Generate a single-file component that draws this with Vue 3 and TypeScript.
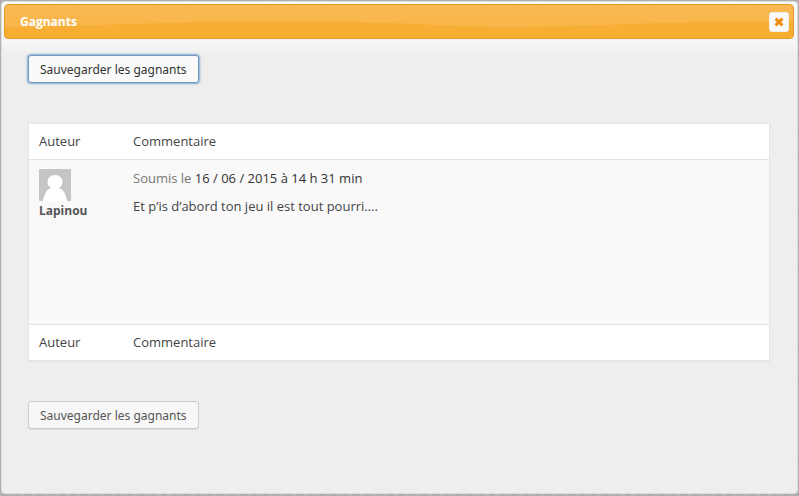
<script setup lang="ts">
import { ref } from 'vue'

interface Comment {
  id: number
  author: string
  date: string
  text: string
}

const open = ref(true)
const comments: Comment[] = [
  {
    id: 1,
    author: 'Lapinou',
    date: '16 / 06 / 2015 à 14 h 31 min',
    text: 'Et p’is d’abord ton jeu il est tout pourri….',
  },
]
</script>

<template>
  <div class="overlay">
    <section v-if="open" class="dialog" role="dialog" aria-labelledby="dialog-title">
      <header class="titlebar">
        <svg class="gloss" aria-hidden="true" width="100%" height="100%">
          <defs>
            <pattern id="wave" width="500" height="34" patternUnits="userSpaceOnUse">
              <path d="M0 0H500V22C440 22 400 16 270 16C150 16 90 22 0 22Z" fill="#fff" fill-opacity=".1" />
            </pattern>
          </defs>
          <rect width="100%" height="100%" fill="url(#wave)" />
        </svg>
        <h1 id="dialog-title">Gagnants</h1>
        <button class="close" type="button" aria-label="Fermer" @click="open = false">
          <svg width="10" height="10" viewBox="0 0 10 10" aria-hidden="true">
            <path d="M1.600 1.600L8.400 8.400M8.400 1.600L1.600 8.400" stroke="#ef8c08" stroke-width="3" />
          </svg>
        </button>
      </header>

      <div class="content">
        <button class="save focused" type="button">Sauvegarder les gagnants</button>
        <table class="comments">
          <thead>
            <tr>
              <th class="author" scope="col">Auteur</th>
              <th scope="col">Commentaire</th>
            </tr>
          </thead>
          <tbody>
            <tr v-for="comment in comments" :key="comment.id">
              <td class="author">
                <svg class="avatar" width="32" height="32" viewBox="0 0 32 32" aria-hidden="true">
                  <rect width="32" height="32" fill="#c5c5c5" />
                  <path d="M4 32C5 25 8 20 12 19C9.500 17.500 8.500 15.500 8.500 13C8.500 9 11.500 6 16 6S23.500 9 23.500 13C23.500 15.500 22.500 17.500 20 19C24 20 27 25 28 32Z" fill="#fff" />
                </svg>
                <strong>{{ comment.author }}</strong>
              </td>
              <td>
                <p class="submitted">Soumis le <time datetime="2015-06-16T14:31">{{ comment.date }}</time></p>
                <p>{{ comment.text }}</p>
              </td>
            </tr>
          </tbody>
          <tfoot>
            <tr>
              <th class="author" scope="col">Auteur</th>
              <th scope="col">Commentaire</th>
            </tr>
          </tfoot>
        </table>
        <button class="save" type="button">Sauvegarder les gagnants</button>
      </div>
    </section>
  </div>
</template>

<style>
body {
  background: #b0b0b0;
}
</style>

<style scoped>
.overlay {
  box-sizing: border-box;
  display: flex;
  min-height: 100vh;
  padding: 1px 1px 2px;
  background: repeating-linear-gradient(135deg, #acacac 0 4px, #b4b4b4 4px 8px);
  color: #444;
  font-family: "Trebuchet MS", "Open Sans", sans-serif;
  font-size: 13px;
  line-height: 18px;
}

.dialog {
  box-sizing: border-box;
  flex: 1;
  padding: 2px 3px 2px 2px;
  border: 1px solid #ddd;
  border-radius: 4px;
  background: #eee linear-gradient(#fafafa 0, #f6f6f6 40px, #eee 56px, #eee 100%);
}

.titlebar {
  position: relative;
  display: flex;
  align-items: center;
  justify-content: space-between;
  box-sizing: border-box;
  height: 35px;
  padding: 0 4px 0 15px;
  border: 1px solid #e5982a;
  border-radius: 4px;
  background: linear-gradient(#f8b040, #f7ad2e);
  color: #fff;
}

.gloss {
  position: absolute;
  inset: 0;
}

h1 {
  position: relative;
  margin: 0;
  font-size: 12px;
  font-weight: 700;
}

.close {
  position: relative;
  display: grid;
  place-items: center;
  width: 20px;
  height: 20px;
  padding: 0;
  border: 1px solid #eee;
  border-radius: 3px;
  background: #fafafa;
}

.content {
  display: flex;
  flex-direction: column;
  align-items: flex-start;
  padding: 16px 24px;
}

.save {
  height: 28px;
  padding: 0 11px;
  border: 1px solid #ccc;
  border-radius: 3px;
  background: #f7f7f7;
  box-shadow: 0 1px 0 #ddd;
  color: #555;
  font: 12px "Noto Sans", sans-serif;
}

.focused {
  border-color: #7499c0;
  background: #fafafa;
  box-shadow: 0 0 2px 1px #84add0;
  color: #333;
}

.comments {
  width: 100%;
  margin: 40px 0;
  border: 1px solid #e5e5e5;
  border-collapse: separate;
  border-spacing: 0;
  background: #fff;
  box-shadow: 0 1px 1px #e5e5e5;
  table-layout: fixed;
}

th,
td {
  padding: 9px 10px;
  text-align: left;
  vertical-align: top;
}

th {
  padding: 8px 10px 9px;
  font-weight: 400;
}

.author {
  width: 74px;
}

tbody td {
  height: 146px;
  border-top: 1px solid #e1e1e1;
  border-bottom: 1px solid #e1e1e1;
  background: #f9f9f9;
}

.avatar {
  display: block;
}

strong {
  color: #555;
  font-size: 12px;
}

p {
  margin: 0 0 10px;
}

.submitted {
  color: #777;
}

time {
  color: #333;
}
</style>
